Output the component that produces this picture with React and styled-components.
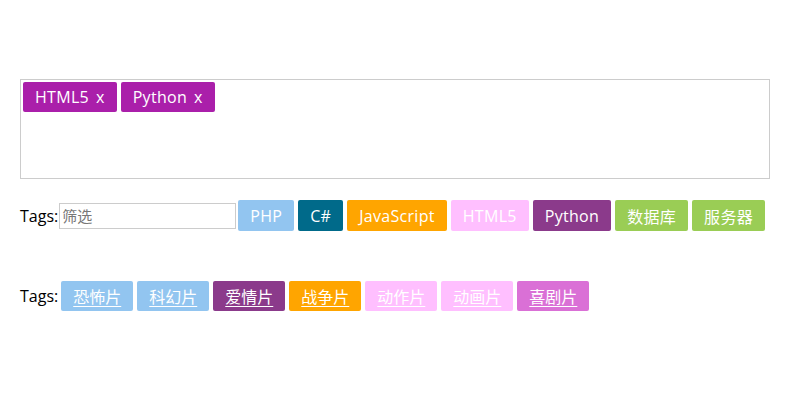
import React, { useState } from 'react'
import styled, { createGlobalStyle } from 'styled-components'

const GlobalStyle = createGlobalStyle`
  body {
    margin: 0;
    background: #fff;
    font-family: "Open Sans", "Noto Sans CJK SC", sans-serif;
    font-size: 16px;
    color: #000;
  }
`

const Page = styled.div`
  padding: 79px 0 0 20px;
`

const SelectedBox = styled.div`
  width: 750px;
  height: 100px;
  border: 1px solid #ccc;
  padding: 2px;
  box-sizing: border-box;
  display: flex;
  align-items: flex-start;
  gap: 4px;
`

const Row = styled.div`
  display: flex;
  align-items: center;
  margin-top: ${p => p.top}px;
`

const Label = styled.span`
  font-size: 16px;
  margin-right: ${p => p.gap || 0}px;
`

const Filter = styled.input`
  width: 177px;
  height: 26px;
  box-sizing: border-box;
  border: 1px solid #ccc;
  padding: 0 2px;
  font-family: "Open Sans", "Noto Sans CJK SC", sans-serif;
  font-size: 15px;
  margin: 1px 2px 0 0;
  outline: none;
  &::placeholder {
    color: #777;
  }
`

const TagList = styled.div`
  display: flex;
  gap: 4px;
`

const Tag = styled.a`
  display: inline-flex;
  align-items: center;
  height: ${p => p.h || 30}px;
  padding: 0 12px;
  background: ${p => p.bg};
  color: #fff;
  border-radius: 2px;
  font-size: 16px;
  letter-spacing: ${p => (p.link ? 0 : 0.3)}px;
  white-space: nowrap;
  text-decoration: ${p => (p.link ? 'underline' : 'none')};
  text-underline-offset: 3px;
  cursor: pointer;
`

const Close = styled.span`
  margin-left: 7px;
`

const skills = [
  { name: 'PHP', bg: '#92c5f0' },
  { name: 'C#', bg: '#006a8a' },
  { name: 'JavaScript', bg: '#ffa500' },
  { name: 'HTML5', bg: '#ffbfff' },
  { name: 'Python', bg: '#8b3a8b' },
  { name: '数据库', bg: '#9acd55' },
  { name: '服务器', bg: '#9acd55' },
]

const movies = [
  { name: '恐怖片', bg: '#92c5f0' },
  { name: '科幻片', bg: '#92c5f0' },
  { name: '爱情片', bg: '#8b3a8b' },
  { name: '战争片', bg: '#ffa500' },
  { name: '动作片', bg: '#ffbfff' },
  { name: '动画片', bg: '#ffbfff' },
  { name: '喜剧片', bg: '#da70d6' },
]

export default function App() {
  const [selected, setSelected] = useState(['HTML5', 'Python'])
  const [filter, setFilter] = useState('')

  const remove = name => setSelected(selected.filter(s => s !== name))

  return (
    <Page>
      <GlobalStyle />
      <SelectedBox>
        {selected.map(s => (
          <Tag key={s} bg="#aa1faa" onClick={() => remove(s)}>
            {s}<Close>x</Close>
          </Tag>
        ))}
      </SelectedBox>

      <Row top={21}>
        <Label gap={1}>Tags:</Label>
        <Filter placeholder="筛选" value={filter} onChange={e => setFilter(e.target.value)} />
        <TagList>
          {skills
            .filter(t => t.name.toLowerCase().includes(filter.toLowerCase()))
            .map(t => (
              <Tag key={t.name} bg={t.bg} h={31}>{t.name}</Tag>
            ))}
        </TagList>
      </Row>

      <Row top={50}>
        <Label gap={3}>Tags:</Label>
        <TagList>
          {movies.map(t => (
            <Tag key={t.name} bg={t.bg} link href="#">{t.name}</Tag>
          ))}
        </TagList>
      </Row>
    </Page>
  )
}
